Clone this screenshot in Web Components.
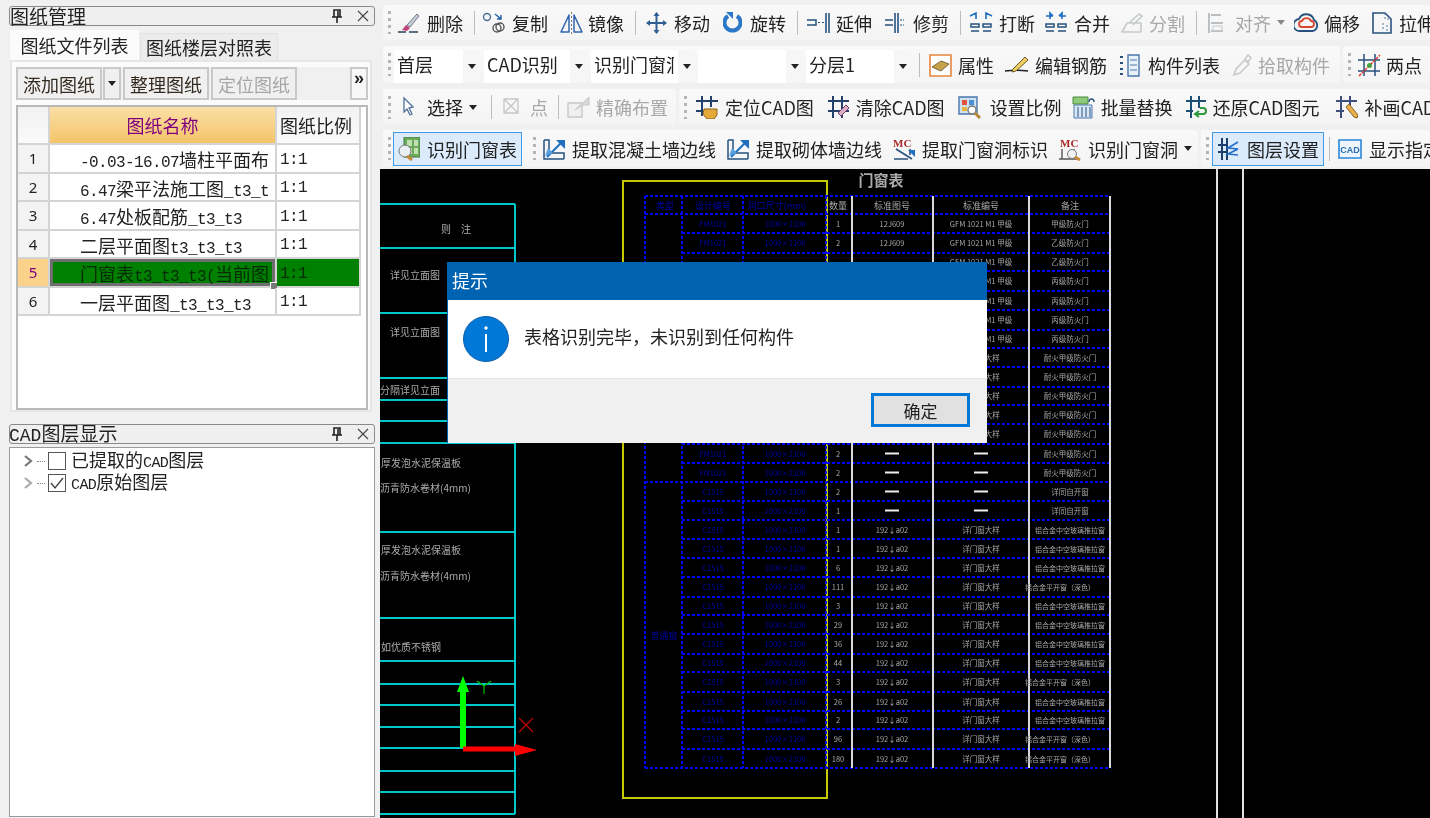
<!DOCTYPE html>
<html lang="zh-CN">

<head>
    <meta charset="UTF-8">
    <title>图纸管理</title>
    <style>
        html, body {
            margin: 0;
            height: 100%;
            overflow: hidden;
            background: #f0f0f0;
            font-family: "Noto Sans CJK SC", "Noto Sans", sans-serif;
        }
    </style>
</head>

<body>
    <app-shell>
        <side-panel slot="side"></side-panel>
        <main-toolbars slot="tools"></main-toolbars>
        <cad-canvas slot="canvas"></cad-canvas>
        <message-box slot="dialog" caption="提示" text="表格识别完毕，未识别到任何构件" button="确定"></message-box>
    </app-shell>

    <script>
        const svg = (w, body) => `<svg width="${w}" height="24" viewBox="0 0 ${w} 24" fill="none">${body}</svg>`;

        const ICONS = {
            brush: svg(24, '<path d="M1 21h8M12 21h9" stroke="#27405f" stroke-width="1.5"/><path d="M10 14 20 3l2 2-9 11z" fill="#c9cdd4" stroke="#6d7a8c"/><path d="M9 14l4 3-3 3-5-1z" fill="#c2457a"/>'),
            copy: svg(25, '<circle cx="5" cy="6" r="3.5" stroke="#4d6e96" stroke-width="1.4"/><circle cx="15" cy="17" r="4" stroke="#555" stroke-width="1.4"/><circle cx="18" cy="16" r="4" stroke="#555" stroke-width="1.4"/><path d="M13 3l6 5M19 4v4h-4" stroke="#1f5fa8" stroke-width="1.4"/>'),
            mirror: svg(23, '<path d="M9 4v17H1zM14 4v17h8z" stroke="#2f64b0" stroke-width="1.5" stroke-linejoin="round"/><path d="M11.5 1v22" stroke="#777" stroke-dasharray="2 2"/>'),
            move: svg(21, '<path d="M10.500 2v20M1 12h19" stroke="#2f5f92" stroke-width="2"/><path d="M10.500 1l-3 4h6zM10.500 23l-3-4h6zM0 12l4-3v6zM21 12l-4-3v6z" fill="#2f5f92"/>'),
            rotate: svg(19, '<path d="M5 5a8 8 0 1 0 9 0" stroke="#2b78c8" stroke-width="4"/><path d="M3 1h7v7z" fill="#2b78c8"/>'),
            extend: svg(24, '<path d="M1 9h9v5H1" stroke="#27527f" stroke-width="1.5"/><path d="M12 11.500h6" stroke="#27527f" stroke-dasharray="2 2"/><path d="M20 2v20M23 2v20" stroke="#27527f" stroke-width="1.6"/>'),
            trim: svg(21, '<path d="M1 9h8M1 14h8M11 2v20M14 2v20" stroke="#27527f" stroke-width="1.6"/><path d="M16 9h4M16 14h4" stroke="#27527f" stroke-dasharray="2 1"/>'),
            split: svg(24, '<path d="M1 5l6-3v6M23 5l-6-3v6" stroke="#1f6fc0" stroke-width="1.6"/><path d="M2 13h8v3H2zM14 13h8v3h-8zM2 20h8M14 20h8" stroke="#27527f" stroke-width="1.5"/>'),
            merge: svg(24, '<path d="M9 5H2M15 5h7M9 5l-3-3v6M15 5l3-3v6" stroke="#1f6fc0" stroke-width="1.6"/><path d="M2 13h8v3H2zM14 13h8v3h-8zM2 20h8M14 20h8" stroke="#27527f" stroke-width="1.5"/>'),
            cut: svg(25, '<path d="M2 21h20M3 21l5-9h14v9M10 12l10-9 3 2-9 9" stroke="#c6cacb" stroke-width="1.6"/>'),
            align: svg(19, '<path d="M2 2v20M4 4h10M4 12h12M4 20h12" stroke="#bcbfc2" stroke-width="2"/><path d="M6 15h9v5H6z" stroke="#c6c9cc"/>'),
            offset: svg(25, '<path d="M6 20a6 6 0 0 1-1-12 8 8 0 0 1 15 1 6 6 0 0 1-1 11z" stroke="#27527f" stroke-width="1.8"/><path d="M8 16a3 3 0 0 1 0-6 5 5 0 0 1 9 0 3 3 0 0 1 0 6z" stroke="#d8482f" stroke-width="1.8"/>'),
            stretch: svg(23, '<path d="M2 2h12l6 6v14H2z" stroke="#27527f" stroke-width="1.6"/><path d="M14 2v6h6M12 12v8M16 14v6" stroke="#4d7aa8" stroke-dasharray="2 2"/>'),
            attr: svg(23, '<path d="M1 2h21v21H1z" fill="#fff" stroke="#e8853a" stroke-width="1.6"/><path d="M3 14l9-6 8 3-8 7z" fill="#c8a24a" stroke="#7a6a3a"/>'),
            rebar: svg(25, '<path d="M1 18c7-1 16-1 23 0" stroke="#222" stroke-width="1.6"/><path d="M9 16 21 4l3 3-12 11-4 1z" fill="#f0cf62" stroke="#6d5a22"/>'),
            list: svg(22, '<path d="M1 4h4M1 10h4M1 16h4M1 21h4" stroke="#27527f" stroke-width="2" stroke-dasharray="3 1"/><path d="M9 2h11v21H9z" fill="#e8f0fa" stroke="#4a77ac" stroke-width="1.4"/><path d="M11 7h7M11 12h7M11 17h7" stroke="#4a77ac"/>'),
            pick: svg(20, '<path d="M2 22l2-6 9-9 4 4-9 9zM13 6l3-4 3 3-3 4z" stroke="#c8cbcc" stroke-width="1.6"/>'),
            twopt: svg(24, '<path d="M7 1v22M18 1v22M1 7h22M1 18h22" stroke="#27527f" stroke-width="1.5"/><path d="M2 23 23 2" stroke="#e23b2e" stroke-width="1.5" stroke-dasharray="3 1"/><circle cx="12.500" cy="12.500" r="2.500" fill="#48a23c"/>'),
            select: svg(13, '<path d="M2 3l9 9-4 1 3 6-2 1-3-6-3 3z" fill="#fff" stroke="#4d6f99" stroke-width="1.3"/>'),
            point: svg(16, '<path d="M1 4h14v14H1zM1 4l14 14M15 4 1 18" stroke="#c4c6c8" stroke-width="1.3"/>'),
            precise: svg(24, '<path d="M1 8h14v14H1z" fill="#f0f0f0" stroke="#c8c8c8" stroke-width="1.4"/><path d="M8 15l14-13v8h-6z" fill="#d8d8d8" stroke="#c8c8c8"/>'),
            locate: svg(24, '<path d="M7 1v20M16 1v11M1 6h22M1 16h7" stroke="#24406d" stroke-width="2"/><path d="M9 14h13v6l-3 4h-7l-4-5z" fill="#e5a93a" stroke="#8a6220"/>'),
            clear: svg(23, '<path d="M6 1v22M15 1v22M1 6h21M1 16h21" stroke="#24406d" stroke-width="2"/><path d="M11 18l8-8 3 3-8 8z" fill="#d9b0c8" stroke="#7a3a66"/>'),
            scale: svg(24, '<path d="M1 2h18v17H1z" fill="#cfe0f0" stroke="#4a77ac" stroke-width="1.4"/><path d="M4 5h5v5H4z" fill="#e0533a"/><path d="M11 5h5v5h-5z" fill="#4a90d8"/><path d="M4 12h5v4H4z" fill="#e8b53a"/><circle cx="14" cy="15" r="4" fill="#fff" stroke="#777" stroke-width="1.4"/><path d="M17 18l5 5" stroke="#b88a3a" stroke-width="3"/>'),
            replace: svg(23, '<path d="M1 2h15v7H1z" fill="#8ccb7c" stroke="#4c8b3c"/><path d="M2 10h18v13H2z" fill="#d8e8f8" stroke="#4a77ac"/><path d="M6 12v10M10 12v10M14 12v10M18 12v10" stroke="#27527f"/><path d="M17 7c0-4 5-4 5 0" stroke="#27527f" stroke-width="1.4"/>'),
            restore: svg(22, '<path d="M6 1v22M14 1v12M1 6h20M1 16h7" stroke="#1c4f76" stroke-width="2"/><path d="M11 19h7a3 3 0 0 0 0-6h-3M14 16l-4 3 4 3" stroke="#2e9a3c" stroke-width="2"/>'),
            redraw: svg(23, '<path d="M6 1v22M15 1v12M1 6h21M1 16h8" stroke="#3d4f7a" stroke-width="2"/><path d="M11 12l3-3 9 11-1 3-3-1z" fill="#eab04a" stroke="#8a6220"/>'),
            table: svg(22, '<path d="M6 0h16v20H6z" fill="#6cab5c" stroke="#44783a"/><path d="M9 3h5v6H9zM16 3h4v6h-4zM9 11h5v6H9zM16 11h4v6h-4z" fill="#bfe0b0"/><circle cx="7" cy="14" r="6" fill="#e8eef2" stroke="#777"/><path d="M9 19l5 4" stroke="#c98a3a" stroke-width="3"/>'),
            wall: svg(24, '<path d="M2 3v19h20M2 3h5v13h15v6" stroke="#27527f" stroke-width="1.5"/><path d="M5 20 20 5" stroke="#1f6fc0" stroke-width="2"/><path d="M14 3h9v9z" fill="#1f6fc0"/><path d="M3 19l3-8 5 5z" fill="#5aa0e0"/>'),
            mark: `<svg width="24" height="24" viewBox="0 0 24 24" fill="none"><text x="1" y="10" font-family="Liberation Serif" font-size="11" font-weight="700" fill="#a82a2a">MC</text><path d="M2 22h14M4 12 20 22M18 12v6" stroke="#27527f" stroke-width="1.6"/><path d="M16 13h7v7z" fill="#1f6fc0"/></svg>`,
            markpick: `<svg width="25" height="24" viewBox="0 0 25 24" fill="none"><text x="2" y="10" font-family="Liberation Serif" font-size="11" font-weight="700" fill="#a82a2a">MC</text><path d="M1 22h18M4 12v10M16 12v6" stroke="#555" stroke-width="1.4"/><circle cx="14" cy="17" r="4.500" fill="#eef2f4" stroke="#777"/><path d="M17 20l5 3" stroke="#c98a3a" stroke-width="3"/></svg>`,
            layers: svg(22, '<path d="M5 1v22M10 1v22M1 8h8M1 15h8" stroke="#1c3f70" stroke-width="2"/><path d="M21 5 11 11l10 1M11 11v1M21 12l-10 5 10 1" stroke="#2470c8" stroke-width="1.600"/>'),
            cadbox: `<svg width="24" height="24" viewBox="0 0 24 24" fill="none"><path d="M1 3h22v18H1z" fill="#eef6fd" stroke="#2a86d8" stroke-width="1.600"/><text x="12" y="16" text-anchor="middle" font-family="Liberation Sans" font-size="9" font-weight="700" fill="#2a6db0">CAD</text></svg>`
        };

        // 把文字里的汉字和西文分开，表格里两者字号不一样
        function mixText(text, cjkSize) {
            return text.replace(/[\u3000-\u9fff（）]+/g, m => `<span style="font-family:'Noto Sans CJK SC',sans-serif;font-size:${cjkSize}px;letter-spacing:0">${m}</span>`);
        }

        class AppShell extends HTMLElement {
            constructor() {
                super();
                this.attachShadow({ mode: 'open' });
                this.shadowRoot.innerHTML = `
            <style>
                :host {
                    display: flex;
                    width: 1430px;
                    height: 818px;
                    overflow: hidden;
                    background: #f0f0f0;
                    color: #222;
                    filter: blur(.3px);
                }
                .side { width: 380px; flex: none; }
                .main {
                    flex: 1;
                    min-width: 0;
                    display: flex;
                    flex-direction: column;
                    position: relative;
                }
                .canvas { flex: 1; min-height: 0; background: #000; }
                ::slotted(message-box) {
                    position: absolute;
                    left: 67px;
                    top: 262px;
                }
            </style>
            <div class="side"><slot name="side"></slot></div>
            <div class="main">
                <slot name="tools"></slot>
                <div class="canvas"><slot name="canvas"></slot></div>
                <slot name="dialog"></slot>
            </div>
        `;
            }
        }

        class DockPanel extends HTMLElement {
            constructor() {
                super();
                this.attachShadow({ mode: 'open' });
                this.shadowRoot.innerHTML = `
            <style>
                :host { display: block; }
                .title {
                    height: 20px;
                    margin-left: 9px;
                    width: 366px;
                    box-sizing: border-box;
                    display: flex;
                    align-items: center;
                    border: 1px solid #8a8a8a;
                    border-radius: 3px;
                    background: #efefef;
                    font-size: 19px;
                    line-height: 20px;
                }
                .name { flex: 1; white-space: nowrap; }
                .btns { display: flex; gap: 14px; padding-right: 5px; align-items: center; }
            </style>
            <div class="title">
                <span class="name"></span>
                <span class="btns">
                    <svg width="12" height="14" viewBox="0 0 12 14"><path d="M3 1h6v7H3zM1 8h10M6 8v6M7 2v6" stroke="#222" stroke-width="1.600" fill="none"/></svg>
                    <svg width="12" height="12" viewBox="0 0 12 12"><path d="M1 1l10 10M11 1 1 11" stroke="#444" stroke-width="1.100"/></svg>
                </span>
            </div>
            <slot></slot>
        `;
            }

            connectedCallback() {
                const name = this.shadowRoot.querySelector('.name');
                const label = this.getAttribute('label');
                name.innerHTML = label.replace(/[A-Z]+/g, m => `<span style="font-family:'Liberation Mono',monospace;font-size:18px;margin-left:-1px">${m}</span>`);
            }
        }

        class SidePanel extends HTMLElement {
            constructor() {
                super();
                this.attachShadow({ mode: 'open' });
                this.shadowRoot.innerHTML = `
            <style>
                :host {
                    display: flex;
                    flex-direction: column;
                    height: 818px;
                    padding-top: 6px;
                    box-sizing: border-box;
                }
                .second { margin-top: 12px; flex: 1; min-height: 0; }
            </style>
            <dock-panel label="图纸管理"><drawing-list></drawing-list></dock-panel>
            <dock-panel class="second" label="CAD图层显示"><layer-tree></layer-tree></dock-panel>
        `;
            }
        }

        class DrawingList extends HTMLElement {
            constructor() {
                super();
                this.attachShadow({ mode: 'open' });
                this.shadowRoot.innerHTML = `
            <style>
                :host { display: block; padding: 4px 8px 0 10px; font-size: 18px; }
                .tabs { display: flex; align-items: flex-end; height: 30px; }
                .tab {
                    display: flex;
                    align-items: center;
                    justify-content: center;
                    box-sizing: border-box;
                }
                .tab.on { width: 129px; height: 30px; background: #fbfbfb; }
                .tab.off { width: 138px; height: 27px; margin-left: 1px; background: #ececec; border: 1px solid #e2e2e2; border-bottom: 0; }
                .body {
                    height: 352px;
                    box-sizing: border-box;
                    background: #fbfbfb;
                    border: 2px solid #e6e6e6;
                    padding: 5px 2px 0 4px;
                    display: flex;
                    flex-direction: column;
                }
                .bar { display: flex; height: 33px; gap: 2px; background: #f0f0f0; flex: none; }
                .bar div {
                    box-sizing: border-box;
                    height: 33px;
                    display: flex;
                    align-items: center;
                    justify-content: center;
                    border: 2px solid #c9c9c9;
                    background: #f0f0f0;
                }
                .bar .b { width: 86px; color: #332a20; }
                .bar .dd { width: 18px; margin-left: -1px; }
                .bar .off { color: #a6a6a6; }
                .bar .more {
                    width: 18px;
                    margin-left: auto;
                    align-items: flex-start;
                    font: 700 18px/18px "Liberation Sans", sans-serif;
                    background: #f7f7f7;
                }
                .grid {
                    margin-top: 5px;
                    flex: 1;
                    box-sizing: border-box;
                    background: #fff;
                    border: 2px solid #b9b9b9;
                    display: grid;
                    grid-template-columns: 32px 227px 84px;
                    grid-template-rows: 38px repeat(6, 28.500px) 1fr;
                }
                .c {
                    box-sizing: border-box;
                    border-right: 2px solid #d4d4d4;
                    border-bottom: 2px solid #d4d4d4;
                    display: flex;
                    align-items: center;
                    white-space: nowrap;
                    overflow: hidden;
                    position: relative;
                }
                .num { background: #f3f3f3; justify-content: center; font: 15px "Noto Sans", sans-serif; }
                .head { background: linear-gradient(#f2f2f2, #fafafa); }
                .name {
                    justify-content: center;
                    color: #800080;
                    background: linear-gradient(#fbdfa6, #f3c468);
                }
                .file { padding: 2px 0 0 30px; font: 16px "Liberation Mono", monospace; letter-spacing: -.6px; }
                .ratio { padding: 3px 0 0 3px; font: 16px "Liberation Mono", monospace; letter-spacing: -.6px; }
                .cur.num { background: #fbd28a; color: #800080; }
                .cur.file, .cur.ratio { background: #008000; color: #062b06; }
                .cur.file { box-shadow: inset 0 0 0 3px #6e6e6e; overflow: visible; }
                .cur.file::after {
                    content: "";
                    position: absolute;
                    right: -3px;
                    bottom: -4px;
                    width: 6px;
                    height: 6px;
                    background: #777;
                    border: 1px solid #fff;
                }
                .caret { width: 0; height: 0; border: 4px solid transparent; border-top: 5px solid #222; border-bottom: 0; }
            </style>
            <div class="tabs">
                <div class="tab on">图纸文件列表</div>
                <div class="tab off">图纸楼层对照表</div>
            </div>
            <div class="body">
                <div class="bar">
                    <div class="b">添加图纸</div>
                    <div class="dd"><span class="caret"></span></div>
                    <div class="b">整理图纸</div>
                    <div class="b off">定位图纸</div>
                    <div class="more">»</div>
                </div>
                <div class="grid"></div>
            </div>
        `;
                this.files = [
                    '-0.03-16.07墙柱平面布',
                    '6.47梁平法施工图_t3_t',
                    '6.47处板配筋_t3_t3',
                    '二层平面图t3_t3_t3',
                    '门窗表t3_t3_t3(当前图',
                    '一层平面图_t3_t3_t3'
                ];
                this.loadRows();
            }

            loadRows() {
                const grid = this.shadowRoot.querySelector('.grid');
                let html = `<div class="c num head"></div><div class="c name">图纸名称</div><div class="c head" style="padding-left:3px">图纸比例</div>`;
                this.files.forEach((file, i) => {
                    const cur = i === 4 ? ' cur' : '';
                    html += `<div class="c num${cur}">${i + 1}</div>`;
                    html += `<div class="c file${cur}"><span>${mixText(file, 18)}</span></div>`;
                    html += `<div class="c ratio${cur}">1:1</div>`;
                });
                grid.innerHTML = html;
            }
        }

        class LayerTree extends HTMLElement {
            constructor() {
                super();
                this.attachShadow({ mode: 'open' });
                this.shadowRoot.innerHTML = `
            <style>
                :host {
                    display: block;
                    box-sizing: border-box;
                    margin: 3px 0 0 9px;
                    width: 366px;
                    height: 370px;
                    background: #fff;
                    border: 1px solid #9a9a9a;
                    padding: 2px 0 0 13px;
                    font-size: 18px;
                    line-height: 20px;
                }
                .row { display: flex; align-items: center; height: 22px; }
                .dots { width: 8px; margin: 0 3px 0 4px; border-top: 1px dotted #888; }
                .box { display: block; margin-right: 5px; }
                .cad { font: 15px/20px "Liberation Mono", monospace; letter-spacing: -.6px; }
            </style>
            <div class="row">
                <svg width="10" height="14" viewBox="0 0 10 14"><path d="M2 2l6 5-6 5" stroke="#777" stroke-width="2.200" fill="none"/></svg>
                <span class="dots"></span>
                <svg class="box" width="18" height="18" viewBox="0 0 18 18"><rect x=".5" y=".5" width="17" height="17" fill="#fff" stroke="#555"/></svg>
                <span>已提取的<span class="cad">CAD</span>图层</span>
            </div>
            <div class="row">
                <svg width="10" height="14" viewBox="0 0 10 14"><path d="M2 2l6 5-6 5" stroke="#aaa" stroke-width="2.200" fill="none"/></svg>
                <span class="dots"></span>
                <svg class="box" width="18" height="18" viewBox="0 0 18 18"><rect x=".5" y=".5" width="17" height="17" fill="#fff" stroke="#555"/><path d="M3 9l4 5 8-10" stroke="#444" stroke-width="1.400" fill="none"/></svg>
                <span><span class="cad">CAD</span>原始图层</span>
            </div>
        `;
            }
        }

        class ToolBar extends HTMLElement {
            constructor() {
                super();
                this.attachShadow({ mode: 'open' });
                this.shadowRoot.innerHTML = `
            <style>
                :host {
                    display: flex;
                    align-items: center;
                    flex: none;
                    height: 100%;
                    padding-left: 5px;
                    box-sizing: border-box;
                    background: linear-gradient(#f9f9f9, #f4f4f4);
                    border-radius: 3px;
                    overflow: hidden;
                }
                .grip {
                    width: 3px;
                    height: 23px;
                    margin-right: 6px;
                    flex: none;
                    background: repeating-linear-gradient(#b4b4b4 0 3px, transparent 3px 7px);
                }
            </style>
            <span class="grip"></span>
            <slot></slot>
        `;
            }
        }

        class ToolItem extends HTMLElement {
            constructor() {
                super();
                this.attachShadow({ mode: 'open' });
                this.shadowRoot.innerHTML = `
            <style>
                :host {
                    display: flex;
                    align-items: center;
                    flex: none;
                    height: 34px;
                    margin-right: 12px;
                    font-size: 18px;
                    white-space: nowrap;
                    color: #222;
                    box-sizing: border-box;
                }
                :host([disabled]) { color: #a8a8a8; }
                :host([active]) {
                    padding: 0 4px 0 4px;
                    background: #dcebfb;
                    border: 1px solid #3f9ae8;
                }
                .icon { display: flex; align-items: center; flex: none; }
                .caret { width: 0; height: 0; margin-left: 6px; border: 4px solid transparent; border-top: 5px solid #222; border-bottom: 0; }
                :host([disabled]) .caret { border-top-color: #888; }
            </style>
            <span class="icon"></span><span class="text"><slot></slot></span>
        `;
            }

            connectedCallback() {
                const icon = this.shadowRoot.querySelector('.icon');
                icon.innerHTML = ICONS[this.getAttribute('icon')] || '';
                icon.style.width = (this.getAttribute('w') || 30) + 'px';
                if (this.hasAttribute('caret')) {
                    const caret = document.createElement('span');
                    caret.className = 'caret';
                    this.shadowRoot.appendChild(caret);
                }
            }
        }

        class ToolSep extends HTMLElement {
            constructor() {
                super();
                this.attachShadow({ mode: 'open' });
                this.shadowRoot.innerHTML = `
            <style>
                :host {
                    display: block;
                    flex: none;
                    width: 1px;
                    height: 24px;
                    margin: 0 7px 0 -1px;
                    background: #bdbdbd;
                }
            </style>
        `;
            }
        }

        class ToolCombo extends HTMLElement {
            constructor() {
                super();
                this.attachShadow({ mode: 'open' });
                this.shadowRoot.innerHTML = `
            <style>
                :host {
                    display: flex;
                    flex: none;
                    align-self: flex-end;
                    height: 33px;
                    margin-right: 3px;
                    background: #fff;
                    font-size: 18px;
                }
                .text {
                    flex: 1;
                    min-width: 0;
                    margin: 0 4px 0 3px;
                    line-height: 29px;
                    white-space: nowrap;
                    overflow: hidden;
                }
                .btn {
                    width: 17px;
                    flex: none;
                    display: flex;
                    align-items: center;
                    justify-content: center;
                    background: #f6f6f6;
                }
                .btn span { width: 0; height: 0; border: 4px solid transparent; border-top: 5px solid #222; border-bottom: 0; }
            </style>
            <div class="text"><slot></slot></div>
            <div class="btn"><span></span></div>
        `;
            }
        }

        class MainToolbars extends HTMLElement {
            constructor() {
                super();
                this.attachShadow({ mode: 'open' });
                this.shadowRoot.innerHTML = `
            <style>
                :host {
                    display: flex;
                    flex-direction: column;
                    height: 169px;
                    flex: none;
                    padding: 5px 0 0 3px;
                    box-sizing: border-box;
                    overflow: hidden;
                }
                .row { display: flex; gap: 3px; flex: none; }
                .r1 { height: 35px; }
                .r2 { height: 37px; margin-top: 6px; }
                .r3 { height: 36px; margin-top: 6px; }
                .r4 { height: 37px; margin-top: 5px; }
                .grow { flex: 1; min-width: 0; }
            </style>
            <div class="row r1">
                <tool-bar class="grow">
                    <tool-item icon="brush">删除</tool-item>
                    <tool-sep></tool-sep>
                    <tool-item icon="copy">复制</tool-item>
                    <tool-item icon="mirror" w="28">镜像</tool-item>
                    <tool-sep style="margin-right:10px"></tool-sep>
                    <tool-item icon="move" w="28" style="margin-right:13px">移动</tool-item>
                    <tool-item icon="rotate" w="27">旋转</tool-item>
                    <tool-sep style="margin-right:8px"></tool-sep>
                    <tool-item icon="extend">延伸</tool-item>
                    <tool-item icon="trim" w="29">修剪</tool-item>
                    <tool-sep style="margin-right:8px"></tool-sep>
                    <tool-item icon="split" style="margin-right:9px">打断</tool-item>
                    <tool-item icon="merge" style="margin-right:9px">合并</tool-item>
                    <tool-item icon="cut" disabled>分割</tool-item>
                    <tool-sep style="margin-right:10px"></tool-sep>
                    <tool-item icon="align" w="28" disabled caret style="margin-right:9px">对齐</tool-item>
                    <tool-item icon="offset" style="margin-right:11px">偏移</tool-item>
                    <tool-item icon="stretch" w="28">拉伸</tool-item>
                </tool-bar>
            </div>
            <div class="row r2">
                <tool-bar style="width:957px">
                    <tool-combo style="width:86px;margin-left:-3px">首层</tool-combo>
                    <tool-combo style="width:103px;margin-left:1px;margin-right:4px">CAD识别</tool-combo>
                    <tool-combo style="width:104px">识别门窗洞口</tool-combo>
                    <tool-combo style="width:105px"></tool-combo>
                    <tool-combo style="width:105px;margin-right:9px">分层1</tool-combo>
                    <tool-sep style="margin-right:9px"></tool-sep>
                    <tool-item icon="attr" w="29" style="margin-right:10px">属性</tool-item>
                    <tool-item icon="rebar" w="31">编辑钢筋</tool-item>
                    <tool-item icon="list" w="29">构件列表</tool-item>
                    <tool-item icon="pick" w="26" disabled>拾取构件</tool-item>
                </tool-bar>
                <tool-bar class="grow">
                    <tool-item icon="twopt" w="29">两点</tool-item>
                </tool-bar>
            </div>
            <div class="row r3">
                <tool-bar style="width:293px">
                    <tool-item icon="select" w="25" caret style="margin-left:5px;margin-right:15px">选择</tool-item>
                    <tool-sep style="margin-right:11px"></tool-sep>
                    <tool-item icon="point" w="27" disabled style="margin-right:11px">点</tool-item>
                    <tool-sep style="margin-right:8px"></tool-sep>
                    <tool-item icon="precise" w="29" disabled>精确布置</tool-item>
                </tool-bar>
                <tool-bar class="grow">
                    <tool-item icon="locate" w="30" style="margin-left:2px;margin-right:13px">定位CAD图</tool-item>
                    <tool-item icon="clear" w="29" style="margin-right:13px">清除CAD图</tool-item>
                    <tool-item icon="scale" w="32" style="margin-right:10px">设置比例</tool-item>
                    <tool-item icon="replace" w="29">批量替换</tool-item>
                    <tool-item icon="restore" w="28" style="margin-right:16px">还原CAD图元</tool-item>
                    <tool-item icon="redraw" w="29">补画CAD图元</tool-item>
                </tool-bar>
            </div>
            <div class="row r4">
                <tool-bar style="width:815px">
                    <tool-item icon="table" w="29" active style="margin-right:11px;margin-left:-4px">识别门窗表</tool-item>
                    <span style="flex:none;width:3px;height:23px;margin-right:6px;background:repeating-linear-gradient(#b4b4b4 0 3px,transparent 3px 7px)"></span>
                    <tool-item icon="wall" style="margin-right:10px">提取混凝土墙边线</tool-item>
                    <tool-item icon="wall" style="margin-right:10px">提取砌体墙边线</tool-item>
                    <tool-item icon="mark" style="margin-right:10px">提取门窗洞标识</tool-item>
                    <tool-item icon="markpick" caret>识别门窗洞</tool-item>
                </tool-bar>
                <tool-bar class="grow">
                    <tool-item icon="layers" w="30" active style="margin-left:-3px;margin-right:6px">图层设置</tool-item>
                    <tool-sep style="margin-right:8px;margin-left:-1px"></tool-sep>
                    <tool-item icon="cadbox" w="31">显示指定图层</tool-item>
                </tool-bar>
            </div>
        `;
            }
        }

        // 画布按整页坐标画，viewBox 的原点就是画布左上角
        class CadCanvas extends HTMLElement {
            constructor() {
                super();
                this.attachShadow({ mode: 'open' });
                this.shadowRoot.innerHTML = `
            <style>
                :host { display: block; width: 1050px; height: 649px; overflow: hidden; background: #000; }
                svg { display: block; }
                text { font-family: "Noto Sans CJK SC", sans-serif; }
            </style>
            <svg width="1050" height="649" viewBox="380 169 1050 649">
                <filter id="soft"><feGaussianBlur stdDeviation=".45"/></filter>
                ${this.drawLeftTable()}${this.drawDoorTable()}${this.drawAxis()}
            </svg>
        `;
            }

            drawLeftTable() {
                const ys = [204, 248, 313, 378, 400, 421, 443, 532, 618, 661, 684, 705, 727, 748, 771, 792, 814];
                const labels = [
                    [441, 233, '则　注'], [390, 279, '详见立面图'], [390, 336, '详见立面图'], [380, 394, '分隔详见立面'],
                    [381, 467, '厚发泡水泥保温板'], [380, 492, '沥青防水卷材(4mm)'],
                    [381, 554, '厚发泡水泥保温板'], [380, 580, '沥青防水卷材(4mm)'], [381, 651, '如优质不锈钢']
                ];
                let out = '<path d="M515 204V814" stroke="#00c8c8" stroke-width="2"/>';
                ys.forEach(y => { out += `<path d="M380 ${y}H515" stroke="#00c8c8" stroke-width="2"/>`; });
                labels.forEach(([x, y, t]) => { out += `<text x="${x}" y="${y}" font-size="10" fill="#aaa" filter="url(#soft)">${t}</text>`; });
                return out;
            }

            drawDoorTable() {
                const ys = [196, 214, 233, 253, 271, 291, 310, 330, 348, 367, 387, 405, 424, 444, 463, 482, 501, 520, 539, 558, 577, 597, 615, 634, 654, 672, 692, 711, 729, 749, 768];
                const full = [196, 214, 482, 768];
                const blue = 'stroke="#0000ff" stroke-width="2" stroke-dasharray="3 2"';
                let out = '<path d="M623 181H827V798H623z" stroke="#c8c800" stroke-width="2" fill="none"/>';
                out += '<text x="881" y="186" text-anchor="middle" font-size="15" font-weight="700" fill="#aaa" filter="url(#soft)">门窗表</text>';
                ys.forEach(y => { out += `<path d="M${full.includes(y) ? 645 : 682} ${y}H1110" ${blue}/>`; });
                [645, 682, 743, 826].forEach(x => { out += `<path d="M${x} 196V768" ${blue}/>`; });
                [852, 933, 1029, 1110].forEach(x => { out += `<path d="M${x} 196V768" stroke="#d8d8d8" stroke-width="2"/>`; });
                [1217, 1243].forEach(x => { out += `<path d="M${x} 169V818" stroke="#e0e0e0" stroke-width="2"/>`; });

                // 被对话框整个盖住的格子不画
                const cell = (x, y, t, fill, size = 7.500) => (x < 950 && y > 262 && y < 443) ? '' :
                    `<text x="${x}" y="${y}" text-anchor="middle" font-size="${size}" fill="${fill}" filter="url(#soft)">${t}</text>`;
                const dim = '#0000a8', gray = '#a8a8a8';
                out += cell(665, 209, '类型', dim, 9) + cell(713, 209, '设计编号', dim, 9) + cell(777, 209, '洞口尺寸(mm)', dim, 9);
                out += cell(838, 209, '数量', gray, 9) + cell(892, 209, '标准图号', gray, 9) + cell(981, 209, '标准编号', gray, 9) + cell(1070, 209, '备注', gray, 9);
                out += cell(664, 639, '普通窗', dim, 9);

                const counts = [1, 2, 1, 1, 1, 4, 4, 2, 2, 1, 1, 2, 2, 2, 2, 1, 1, 1, 6, 111, 3, 29, 36, 44, 3, 26, 2, 96, 180, 24];
                for (let i = 1; i < ys.length - 1; i++) {
                    const y = (ys[i] + ys[i + 1]) / 2 + 3;
                    const count = counts[i - 1];
                    out += cell(713, y, i < 15 ? 'FM1021' : 'C1515', dim) + cell(785, y, '1000×2100', dim) + cell(838, y, count, gray);
                    if (i < 8) {
                        const grade = i < 2 ? '甲级防火门' : i < 4 ? '乙级防火门' : '丙级防火门';
                        out += cell(892, y, '12J609', gray) + cell(981, y, 'GFM 1021 M1 甲级', gray) + cell(1070, y, grade, gray);
                    } else if (i < 13) {
                        out += cell(981, y, '详门窗大样', gray) + cell(1070, y, '耐火甲级防火门', gray);
                    } else if (i < 17) {
                        out += `<path d="M885 ${y - 3}h14M974 ${y - 3}h14" stroke="#eee" stroke-width="2"/>`;
                        out += cell(1070, y, i < 15 ? '耐火甲级防火门' : '详同自开窗', gray);
                    } else {
                        const wide = [20, 25, 28, 29].includes(i);
                        out += cell(892, y, '192↓a02', gray) + cell(981, y, '详门窗大样', gray);
                        out += cell(wide ? 1060 : 1070, y, wide ? '铝合金平开窗（深色）' : '铝合金中空玻璃推拉窗', gray, 7);
                    }
                }
                return out;
            }

            drawAxis() {
                return `
                <path d="M463 748V688" stroke="#00ff00" stroke-width="6"/>
                <path d="M463 676l-6 16h12z" fill="#00ff00"/>
                <path d="M463 749H517" stroke="#ff0000" stroke-width="5"/>
                <path d="M537 750l-22-6v12z" fill="#ff0000"/>
                <path d="M477 681l7 5 7-5M484 686v8" stroke="#00c000" stroke-width="1.200" fill="none"/>
                <path d="M519 718l14 14M533 718l-14 14" stroke="#c00000" stroke-width="1.300"/>`;
            }
        }

        class MessageBox extends HTMLElement {
            constructor() {
                super();
                this.attachShadow({ mode: 'open' });
                this.shadowRoot.innerHTML = `
            <style>
                :host {
                    display: flex;
                    flex-direction: column;
                    width: 540px;
                    height: 181px;
                    box-sizing: border-box;
                    border-left: 1px solid #0063b1;
                    background: #fff;
                    color: #222;
                }
                .cap {
                    height: 38px;
                    flex: none;
                    padding-left: 5px;
                    background: #0063b1;
                    color: #fff;
                    font-size: 18px;
                    line-height: 36px;
                    margin-left: -1px;
                }
                .body {
                    height: 78px;
                    flex: none;
                    display: flex;
                    align-items: center;
                    gap: 15px;
                    padding: 0 0 0 15px;
                    box-sizing: border-box;
                    font-size: 18px;
                }
                .msg { margin-top: -6px; }
                .foot {
                    flex: 1;
                    display: flex;
                    align-items: center;
                    justify-content: flex-end;
                    padding: 0 17px 2px 0;
                    background: #f0f0f0;
                    border-top: 1px solid #e3e3e3;
                }
                .ok {
                    width: 99px;
                    height: 34px;
                    box-sizing: border-box;
                    border: 3px solid #0078d7;
                    background: #e1e1e1;
                    display: flex;
                    align-items: center;
                    justify-content: center;
                    font-size: 17px;
                }
            </style>
            <div class="cap"></div>
            <div class="body">
                <svg width="46" height="46" viewBox="0 0 46 46"><circle cx="23" cy="23" r="22.500" fill="#0078d7" stroke="#0a5ea8"/><path d="M23 18v18" stroke="#fff" stroke-width="2"/><circle cx="23" cy="12" r="1.700" fill="#fff"/></svg>
                <span class="msg"></span>
            </div>
            <div class="foot"><div class="ok"></div></div>
        `;
            }

            connectedCallback() {
                this.shadowRoot.querySelector('.cap').textContent = this.getAttribute('caption');
                this.shadowRoot.querySelector('.msg').textContent = this.getAttribute('text');
                this.shadowRoot.querySelector('.ok').textContent = this.getAttribute('button');
            }
        }

        customElements.define('tool-bar', ToolBar);
        customElements.define('tool-item', ToolItem);
        customElements.define('tool-sep', ToolSep);
        customElements.define('tool-combo', ToolCombo);
        customElements.define('dock-panel', DockPanel);
        customElements.define('drawing-list', DrawingList);
        customElements.define('layer-tree', LayerTree);
        customElements.define('side-panel', SidePanel);
        customElements.define('main-toolbars', MainToolbars);
        customElements.define('cad-canvas', CadCanvas);
        customElements.define('message-box', MessageBox);
        customElements.define('app-shell', AppShell);
    </script>
</body>

</html>
